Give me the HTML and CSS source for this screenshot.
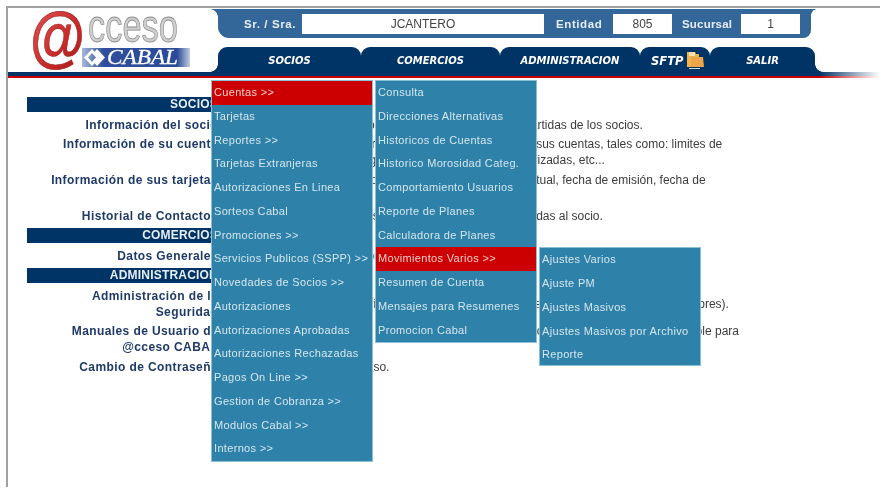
FILE: index.html
```html
<!DOCTYPE html>
<html lang="es">
<head>
<meta charset="utf-8">
<title>@cceso Cabal</title>
<link rel="stylesheet" href="styles.css">
</head>
<body>
<div class="page">
  <header class="header">
    <div class="head-row">
      <a class="logo" href="#">
        <svg width="210" height="64" viewBox="0 0 210 64">
          <defs>
            <linearGradient id="band" x1="0" x2="1" y1="0" y2="0">
              <stop offset="0" stop-color="#a9b8d8"/>
              <stop offset=".2" stop-color="#2f4f9c"/>
              <stop offset=".88" stop-color="#2a4b97"/>
              <stop offset="1" stop-color="#c4cde2"/>
            </linearGradient>
            <linearGradient id="at" x1="0" x2="1" y1="0" y2="1">
              <stop offset="0" stop-color="#e25a5a"/>
              <stop offset=".6" stop-color="#c92a2a"/>
              <stop offset="1" stop-color="#a01818"/>
            </linearGradient>
          </defs>
          <text class="logo-cceso" x="80" y="34" textLength="90" lengthAdjust="spacingAndGlyphs">cceso</text>
          <rect x="74" y="40" width="108" height="19" fill="url(#band)"/>
          <path d="M76 49.500L84 41L92 49.500L84 58Z M80 49.500L84 54L88 49.500L84 45Z" fill="#fff" fill-rule="evenodd"/>
          <path d="M89 41L97 49.500L89 58L86.500 55L91.500 49.500L86.500 44Z" fill="#fff"/>
          <text class="logo-cabal" x="99" y="56" textLength="71" lengthAdjust="spacingAndGlyphs">CABAL</text>
          <text class="logo-at" x="22" y="51" textLength="55" lengthAdjust="spacingAndGlyphs">@</text>
        </svg>
      </a>
      <div class="head-right">
        <div class="userbar">
          <span class="ub-label ub-sr">Sr. / Sra.</span>
          <span class="ub-box ub-user">JCANTERO</span>
          <span class="ub-label ub-ent">Entidad</span>
          <span class="ub-box ub-num">805</span>
          <span class="ub-label ub-suc">Sucursal</span>
          <span class="ub-box ub-num">1</span>
        </div>
        <nav class="tabs">
          <a class="tab tab-socios" href="#">SOCIOS</a>
          <a class="tab tab-comercios" href="#">COMERCIOS</a>
          <a class="tab tab-admin" href="#">ADMINISTRACION</a>
          <a class="tab tab-sftp" href="#">SFTP
            <svg class="folder" width="19" height="19" viewBox="0 0 19 19">
              <path d="M1 1H9L10 3H13V16H1Z" fill="#f2b24c"/>
              <path d="M3 1H9V5H3Z" fill="#fbe3b0"/>
              <path d="M5 6H17L18 16H5Z" fill="#eca548"/>
              <path d="M3 17H14V18H3Z" fill="#d8d8d8"/>
            </svg>
          </a>
          <a class="tab tab-salir" href="#">SALIR</a>
        </nav>
      </div>
    </div>
    <div class="rule-navy"></div>
    <div class="rule-red"></div>
  </header>

  <main class="content">
    <h2 class="band">SOCIOS</h2>
    <div class="label">Información del socio</div>
    <div class="desc">Consulta de los datos personales, domicilios, créditos y partidas de los socios.</div>
    <div class="label">Información de su cuenta</div>
    <div class="desc">Consulta de los datos generales y de los saldos reales de sus cuentas, tales como: limites de compra, saldos, cuotas, pagos, moras y operaciones autorizadas, etc...</div>
    <div class="label">Información de sus tarjetas</div>
    <div class="desc">Consultas de los datos de todas sus tarjetas, su estado actual, fecha de emisión, fecha de vencimiento.</div>
    <div class="label">Historial de Contactos</div>
    <div class="desc">Consultas del detalles de los contactos y gestiones realizadas al socio.</div>

    <h2 class="band">COMERCIOS</h2>
    <div class="label">Datos Generales</div>
    <div class="desc">Consulta de datos de los comercios.</div>

    <h2 class="band">ADMINISTRACION</h2>
    <div class="label">Administración de la Seguridad</div>
    <div class="desc desc-mid">Administración de los usuarios, perfiles, permisos y el ingreso de sus sucursales (operadores).</div>
    <div class="label">Manuales de Usuario de @cceso CABAL</div>
    <div class="desc">Manuales de usos de todos los módulos del sistema, con toda la documentación disponible para los usuarios.</div>
    <div class="label">Cambio de Contraseña</div>
    <div class="desc">Cambio de la clave de acceso.</div>
  </main>

  <ul class="menu menu-main">
    <li class="item active">Cuentas &gt;&gt;
      <ul class="menu menu-sub">
        <li class="item">Consulta</li>
        <li class="item">Direcciones Alternativas</li>
        <li class="item">Historicos de Cuentas</li>
        <li class="item">Historico Morosidad Categ.</li>
        <li class="item">Comportamiento Usuarios</li>
        <li class="item">Reporte de Planes</li>
        <li class="item">Calculadora de Planes</li>
        <li class="item active">Movimientos Varios &gt;&gt;
          <ul class="menu menu-sub menu-sub3">
            <li class="item">Ajustes Varios</li>
            <li class="item">Ajuste PM</li>
            <li class="item">Ajustes Masivos</li>
            <li class="item">Ajustes Masivos por Archivo</li>
            <li class="item">Reporte</li>
          </ul>
        </li>
        <li class="item">Resumen de Cuenta</li>
        <li class="item">Mensajes para Resumenes</li>
        <li class="item">Promocion Cabal</li>
      </ul>
    </li>
    <li class="item">Tarjetas</li>
    <li class="item">Reportes &gt;&gt;</li>
    <li class="item">Tarjetas Extranjeras</li>
    <li class="item">Autorizaciones En Linea</li>
    <li class="item">Sorteos Cabal</li>
    <li class="item">Promociones &gt;&gt;</li>
    <li class="item">Servicios Publicos (SSPP) &gt;&gt;</li>
    <li class="item">Novedades de Socios &gt;&gt;</li>
    <li class="item">Autorizaciones</li>
    <li class="item">Autorizaciones Aprobadas</li>
    <li class="item">Autorizaciones Rechazadas</li>
    <li class="item">Pagos On Line &gt;&gt;</li>
    <li class="item">Gestion de Cobranza &gt;&gt;</li>
    <li class="item">Modulos Cabal &gt;&gt;</li>
    <li class="item">Internos &gt;&gt;</li>
  </ul>
</div>
</body>
</html>
```
FILE: styles.css
```css
* { box-sizing: border-box; }
html, body { margin: 0; padding: 0; background: #fff; }
body { font-family: "Liberation Sans", Arial, sans-serif; filter: blur(.45px); height: 493px; overflow: hidden; }

.page {
  position: relative;
  margin: 6px 0 0 6px;
  width: 874px;
  height: 481px;
  border-top: 2px solid #a0a0a0;
  border-left: 2px solid #a0a0a0;
}

/* header */
.head-row { display: flex; height: 64px; }
.logo { display: block; width: 210px; height: 64px; }
.logo svg { display: block; overflow: visible; }
.logo-cceso { font: 46px "Liberation Sans", sans-serif; fill: #cfcfcf; stroke: #8d8d8d; stroke-width: .8px; }
.logo-cabal { font: italic 20px "Liberation Serif", serif; fill: #fff; stroke: #fff; stroke-width: .3px; }
.logo-at { font: bold 66px "Liberation Sans", sans-serif; fill: url(#at); stroke: #9c1c1c; stroke-width: .6px; }

.head-right { width: 597px; display: flex; flex-direction: column; padding-top: 1px; }
.userbar {
  position: relative;
  display: flex;
  align-items: center;
  width: 593px;
  height: 29px;
  background: #336699;
  border-radius: 0 0 8px 11px;
  padding-left: 26px;
  font-size: 12px;
}
.userbar::before {
  content: "";
  position: absolute;
  left: -8px; top: 0;
  width: 8px; height: 8px;
  background: radial-gradient(circle at 0 100%, transparent 7.500px, #336699 8px);
}
.userbar::after {
  content: "";
  position: absolute;
  right: -6px; top: 0;
  width: 6px; height: 6px;
  background: radial-gradient(circle at 100% 100%, transparent 5.500px, #336699 6px);
}
.ub-label { color: #e6edf4; font-weight: bold; font-size: 11.500px; letter-spacing: .6px; white-space: nowrap; }
.ub-sr { width: 58px; }
.ub-ent { width: 57px; margin-left: 12px; }
.ub-suc { width: 59px; margin-left: 10px; letter-spacing: .2px; }
.ub-box {
  display: flex;
  align-items: center;
  justify-content: center;
  height: 20px;
  background: #fff;
  color: #444;
}
.ub-user { width: 242px; }
.ub-num { width: 59px; }

.tabs { display: flex; height: 25px; margin-top: 9px; }
.tab {
  position: relative;
  display: flex;
  align-items: center;
  justify-content: center;
  gap: 3px;
  background: #003366;
  color: #fff;
  border-radius: 9px 9px 0 0;
  text-decoration: none;
  font: italic bold 10px "DejaVu Sans", sans-serif;
  padding-top: 2px;
}
.tab-socios { width: 143px; }
.tab-comercios { width: 139px; }
.tab-admin { width: 140px; }
.tab-sftp { width: 70px; font-size: 11.500px; justify-content: flex-start; padding-left: 11px; }
.tab-salir { width: 105px; }
.folder { margin-top: -1px; }
.tab-socios::before {
  content: "";
  position: absolute;
  left: -8px; bottom: 0;
  width: 8px; height: 8px;
  background: radial-gradient(circle at 0 0, transparent 7.500px, #003366 8px);
}
.tab-salir::after {
  content: "";
  position: absolute;
  right: -8px; bottom: 0;
  width: 8px; height: 8px;
  background: radial-gradient(circle at 100% 0, transparent 7.500px, #003366 8px);
}
.rule-navy { height: 4px; background: linear-gradient(to right, #003366 0, #003366 93%, rgba(0,51,102,0) 100%); }
.rule-red { height: 2px; background: linear-gradient(to right, #cc0000 0, #cc0000 93%, rgba(204,0,0,0) 100%); }

/* content */
.content {
  display: grid;
  grid-template-columns: 191px 514px;
  column-gap: 8px;
  row-gap: 3.700px;
  margin: 18.500px 0 0 19px;
}
.band {
  grid-column: 1;
  margin: .5px 0 0;
  height: 15px;
  line-height: 15px;
  background: #003366;
  color: #e8eef4;
  font-size: 12px;
  font-weight: bold;
  text-align: right;
  letter-spacing: .2px;
}
.band + .label { margin-top: 1px; }
.band + .label + .desc { margin-top: 1px; }
.label {
  grid-column: 1;
  color: #1f3a68;
  font-size: 12px;
  font-weight: bold;
  line-height: 16px;
  text-align: right;
  letter-spacing: .4px;
}
.desc {
  grid-column: 2;
  color: #3c3c3c;
  font-size: 12px;
  line-height: 16px;
}
.desc-mid { align-self: center; }

/* menus */
.menu {
  list-style: none;
  margin: 0;
  padding: 0;
  width: 162px;
  background: #2e81a8;
  border: 1px solid #8cc0d8;
}
.menu-main { position: absolute; left: 203px; top: 72px; }
.menu-sub { position: absolute; left: 163px; top: -1px; }
.menu-sub3 { top: 0; height: 119px; }
.item {
  position: relative;
  height: 23.750px;
  line-height: 23.750px;
  padding-left: 2px;
  color: #d4e6ee;
  font-size: 11px;
  letter-spacing: .33px;
  white-space: nowrap;
}
.item.active { background: #cc0000; color: #f0cccc; }
```
